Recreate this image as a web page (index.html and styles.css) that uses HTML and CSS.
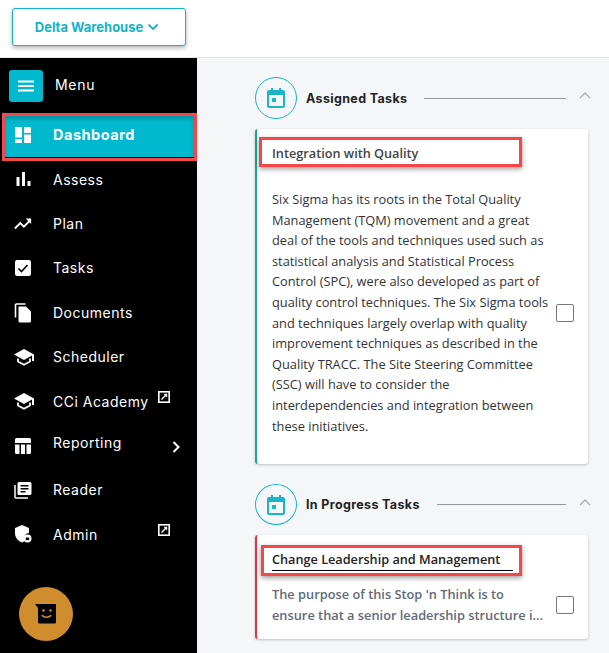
FILE: index.html
```html
<!DOCTYPE html>
<html lang="en">
<head>
<meta charset="utf-8">
<title>Delta Warehouse</title>
<link rel="stylesheet" href="styles.css">
</head>
<body>
<header class="topbar">
  <button class="site-btn">Delta Warehouse
    <svg class="site-chev" viewBox="0 0 12 8"><path d="M1.500 1.500 6 6l4.500-4.500" fill="none" stroke="currentColor" stroke-width="1.800"/></svg>
  </button>
</header>
<div class="layout">
  <nav class="sidebar">
    <div class="menu-row">
      <span class="menu-btn"><svg viewBox="0 0 16 12" width="16" height="12"><path d="M0 1.500h16M0 6h16M0 10.500h16" stroke="#fff" stroke-width="1.800"/></svg></span>
      <span class="menu-label">Menu</span>
    </div>
    <a class="nav-item active">
      <svg class="ico" viewBox="0 0 18 18"><path fill="#fff" d="M1 1h7v10.500H1zM10 1h7v6h-7zM10 8.500h7v8.500h-7zM1 13h7v4H1z"/></svg>
      <span>Dashboard</span>
    </a>
    <div class="nav-list">
      <a class="nav-item">
        <svg class="ico" viewBox="0 0 18 18"><path fill="#fff" d="M2.500 7h3v9h-3zM8 2h3v14H8zM13.500 11h3v5h-3z"/></svg>
        <span>Assess</span></a>
      <a class="nav-item">
        <svg class="ico" viewBox="0 0 20 18"><path fill="none" stroke="#fff" stroke-width="2.200" d="M1 14l6-6 4 4 7-7"/><path fill="#fff" d="M13 3h6v6z"/></svg>
        <span>Plan</span></a>
      <a class="nav-item">
        <svg class="ico" viewBox="0 0 18 18"><rect x="1" y="1" width="16" height="16" rx="2" fill="#fff"/><path d="M4.500 9.500l3 3 6-6.500" fill="none" stroke="#000" stroke-width="1.600"/></svg>
        <span>Tasks</span></a>
      <a class="nav-item">
        <svg class="ico ico-doc" viewBox="0 0 18 20"><path fill="none" stroke="#fff" stroke-width="1.600" d="M1.500 15V2.500a1 1 0 0 1 1-1h9"/><path fill="#fff" d="M4.500 4h7.500l5 5v9.500a1.500 1.500 0 0 1-1.500 1.500H6a1.500 1.500 0 0 1-1.500-1.500z"/></svg>
        <span>Documents</span></a>
      <a class="nav-item">
        <svg class="ico ico-wide" viewBox="0 0 20 18"><path fill="#fff" d="M10 1 0 6.500 10 12l8-4.400V13h2V6.500z"/><path fill="none" stroke="#fff" stroke-width="1.800" d="M4 10.500v3l6 3.200 6-3.200v-3"/></svg>
        <span>Scheduler</span></a>
      <a class="nav-item">
        <svg class="ico ico-wide" viewBox="0 0 20 18"><path fill="#fff" d="M10 1 0 6.500 10 12l8-4.400V13h2V6.500z"/><path fill="none" stroke="#fff" stroke-width="1.800" d="M4 10.500v3l6 3.200 6-3.200v-3"/></svg>
        <span>CCi Academy</span>
        <svg class="ext" viewBox="0 0 12 12"><rect x=".8" y=".8" width="10.400" height="10.400" fill="none" stroke="#fff" stroke-width="1.600"/><path fill="none" stroke="#fff" stroke-width="1.500" d="M3.500 8.500 8 4"/><path fill="#fff" d="M5.500 2.800h3.700v3.700z"/></svg>
      </a>
      <a class="nav-item">
        <svg class="ico" viewBox="0 0 18 18"><path fill="#fff" d="M2.500 1h13A1.500 1.500 0 0 1 17 2.500V6H1V2.500A1.500 1.500 0 0 1 2.500 1zM1 7.500h4.500V17h-3A1.500 1.500 0 0 1 1 15.500zM7 7.500h4V17H7zM12.500 7.500H17v8a1.500 1.500 0 0 1-1.500 1.500h-3z"/></svg>
        <span class="raise">Reporting</span>
        <svg class="more" viewBox="0 0 8 12"><path d="M1.500 1 6.500 6l-5 5" fill="none" stroke="#fff" stroke-width="2"/></svg>
      </a>
      <a class="nav-item">
        <svg class="ico" viewBox="0 0 18 18"><path fill="none" stroke="#fff" stroke-width="1.500" d="M1 4v12a1 1 0 0 0 1 1h12"/><path fill="#fff" fill-rule="evenodd" d="M5 1h11a1.500 1.500 0 0 1 1.500 1.500v10A1.500 1.500 0 0 1 16 14H5a1.500 1.500 0 0 1-1.500-1.500v-10A1.500 1.500 0 0 1 5 1zm1.500 3v1.500h8V4zm0 3v1.500h8V7zm0 3v1.500h5V10z"/></svg>
        <span>Reader</span></a>
      <a class="nav-item">
        <svg class="ico" viewBox="0 0 18 18"><path fill="#fff" d="M8 0 1 3v5c0 4.500 3 8 7 9.500 1-.4 2-1 2.800-1.700A5 5 0 0 1 15 8V3z"/><circle cx="13.500" cy="13.500" r="4" fill="#fff"/><rect x="11.800" y="12.500" width="3.400" height="2.600" fill="#000"/></svg>
        <span>Admin</span>
        <svg class="ext" viewBox="0 0 12 12"><rect x=".8" y=".8" width="10.400" height="10.400" fill="none" stroke="#fff" stroke-width="1.600"/><path fill="none" stroke="#fff" stroke-width="1.500" d="M3.500 8.500 8 4"/><path fill="#fff" d="M5.500 2.800h3.700v3.700z"/></svg>
      </a>
    </div>
    <div class="fab">
      <svg viewBox="0 0 22 20" width="22" height="20"><path fill="#000" d="M0 0h21v18a1.500 1.500 0 0 1-1.500 1.500h-15A1.500 1.500 0 0 1 3 18V4z"/><circle cx="8.500" cy="6.500" r="1.300" fill="#cf8d2e"/><circle cx="15.500" cy="6.500" r="1.300" fill="#cf8d2e"/><path d="M7 11c1.500 3 7.500 3 9 0" fill="none" stroke="#cf8d2e" stroke-width="1.600"/></svg>
    </div>
  </nav>
  <main class="content">
    <section class="group">
      <div class="group-head">
        <span class="cal"><svg viewBox="0 0 18 20" width="18" height="20"><path fill="#1cb5c8" fill-rule="evenodd" d="M4 0h2v2h6V0h2v2h2a2 2 0 0 1 2 2v14a2 2 0 0 1-2 2H2a2 2 0 0 1-2-2V4a2 2 0 0 1 2-2h2zM2 7v11h14V7zm3 3h4v4H5z"/></svg></span>
        <h2 class="group-title">Assigned Tasks</h2>
        <span class="rule"></span>
        <svg class="collapse" viewBox="0 0 12 7"><path d="M1 6l5-5 5 5" fill="none" stroke="#a9adb3" stroke-width="1.300"/></svg>
      </div>
      <article class="card card-green">
        <h3 class="card-title">Integration with Quality</h3>
        <span class="mark mark-a"></span>
        <div class="card-body">
          <p class="text">Six Sigma has its roots in the Total Quality<br>Management (TQM) movement and a great<br>deal of the tools and techniques used such as<br>statistical analysis and Statistical Process<br>Control (SPC), were also developed as part of<br>quality control techniques. The Six Sigma tools<br>and techniques largely overlap with quality<br>improvement techniques as described in the<br>Quality TRACC. The Site Steering Committee<br>(SSC) will have to consider the<br>interdependencies and integration between<br>these initiatives.</p>
          <span class="check"></span>
        </div>
      </article>
    </section>
    <section class="group">
      <div class="group-head">
        <span class="cal"><svg viewBox="0 0 18 20" width="18" height="20"><path fill="#1cb5c8" fill-rule="evenodd" d="M4 0h2v2h6V0h2v2h2a2 2 0 0 1 2 2v14a2 2 0 0 1-2 2H2a2 2 0 0 1-2-2V4a2 2 0 0 1 2-2h2zM2 7v11h14V7zm3 3h4v4H5z"/></svg></span>
        <h2 class="group-title">In Progress Tasks</h2>
        <span class="rule"></span>
        <svg class="collapse" viewBox="0 0 12 7"><path d="M1 6l5-5 5 5" fill="none" stroke="#a9adb3" stroke-width="1.300"/></svg>
      </div>
      <article class="card card-red">
        <h3 class="card-title underlined">Change Leadership and Management</h3>
        <span class="mark mark-b"></span>
        <div class="card-body short">
          <p class="text muted">The purpose of this Stop 'n Think is to<br>ensure that a senior leadership structure i...</p>
          <span class="check"></span>
        </div>
      </article>
    </section>
  </main>
</div>
</body>
</html>
```
FILE: styles.css
```css
* { box-sizing: border-box; }
html, body { margin: 0; height: 653px; overflow: hidden; }
body { font-family: "Open Sans", "Noto Sans", sans-serif; background: #f5f6f8; color: #222; }

.topbar { height: 58px; background: #fff; border-bottom: 1px solid #e3e7ec; padding: 8px 12px; }
.site-btn {
  width: 174px; height: 38px; display: flex; align-items: center; justify-content: center; gap: 4px;
  background: #fff; border: 1px solid #14b3c6; border-radius: 3px;
  box-shadow: 0 2px 4px rgba(0,0,0,.3);
  color: #14b3c6; font: 700 13px "Inter", sans-serif; padding: 0 4px 0 0;
}
.site-chev { width: 12px; height: 8px; }

.layout { display: flex; height: 595px; }
.sidebar { width: 197px; background: #000; color: #fff; font-family: "Inter", sans-serif; font-size: 14px; display: flex; flex-direction: column; flex: none; }

.menu-row { display: flex; align-items: center; height: 55px; padding-left: 9px; gap: 12px; flex: none; }
.menu-btn { width: 34px; height: 32px; background: #00b9cf; border-radius: 3px; display: flex; align-items: center; justify-content: center; }
.menu-label { font-size: 14px; letter-spacing: .7px; position: relative; top: -1px; }

.nav-item { display: flex; align-items: center; height: 44.400px; padding-left: 14px; color: #fff; letter-spacing: .5px; position: relative; }
.nav-item > span { margin-left: 21px; }
.ico { width: 18px; height: 18px; flex: none; }
.ico-doc { height: 21px; }
.ico-wide { width: 20px; margin-right: -2px; }
.ext { position: absolute; left: 158px; top: 12px; width: 12px; height: 12px; }
.more { position: absolute; left: 172px; top: 18px; width: 8px; height: 12px; }
.raise { position: relative; top: -3px; }

.nav-item.active {
  height: 48px; background: #00b9cf; font-weight: 700; font-size: 14.500px; flex: none;
  border: 3px solid #f4474c; margin-left: 2px; width: 195px; padding: 0 0 5px 9px;
  box-shadow: inset 0 3px 4px rgba(0,0,0,.2), inset 0 -1px 0 #000;
}
.nav-list { margin-top: -4px; }

.fab { width: 54px; height: 54px; border-radius: 50%; background: #cf8d2e; margin: 30px 0 0 19px; display: flex; align-items: center; justify-content: center; flex: none; }

.content { flex: 1; padding: 19px 21px 0 58px; min-width: 0; }
.group { margin-bottom: 20px; }
.group-head { display: flex; align-items: center; height: 42px; margin-bottom: 10px; position: relative; }
.group + .group .group-head { height: 41px; }
.cal { width: 42px; height: 100%; border: 1px solid #1cb5c8; border-radius: 50%; display: flex; align-items: center; justify-content: center; flex: none; }
.group-title { margin: 0 0 0 9px; font: 700 12.500px "Inter", sans-serif; color: #222; letter-spacing: .35px; }
.rule { flex: 1; height: 1px; background: #999; margin: 0 22px 0 17px; }
.collapse { position: absolute; right: -3px; top: 15px; width: 12px; height: 7px; }

.card { background: #fff; border-radius: 3px; box-shadow: 0 1px 3px rgba(0,0,0,.22); position: relative; padding: 14px 14px 0 15px; }
.card-green { border-left: 2px solid #1aa595; height: 335px; }
.card-red { border-left: 2px solid #dc3545; height: 104px; }
.card-title { margin: 0; font-size: 12.700px; font-weight: 600; line-height: 20px; color: #444; }
.card-title.underlined { color: #222; width: 241px; border-bottom: 1px solid #000; padding-bottom: 1px; }

.mark { position: absolute; border: 3px solid #f4474c; box-shadow: 0 2px 5px rgba(0,0,0,.4); pointer-events: none; }
.mark-a { left: 2px; top: 8px; width: 263px; height: 30px; }
.mark-b { left: 4px; top: 10px; width: 261px; height: 31px; }

.card-body { display: flex; align-items: center; margin-top: 26px; justify-content: space-between; }
.card-body.short { margin-top: 13px; }
.text { margin: 0; font-size: 12.800px; line-height: 20.600px; color: #333; white-space: nowrap; }
.text.muted { color: #626a78; font-weight: 600; }
.check { width: 18px; height: 18px; border: 1px solid #777; border-radius: 2px; background: #fff; flex: none; }
```
